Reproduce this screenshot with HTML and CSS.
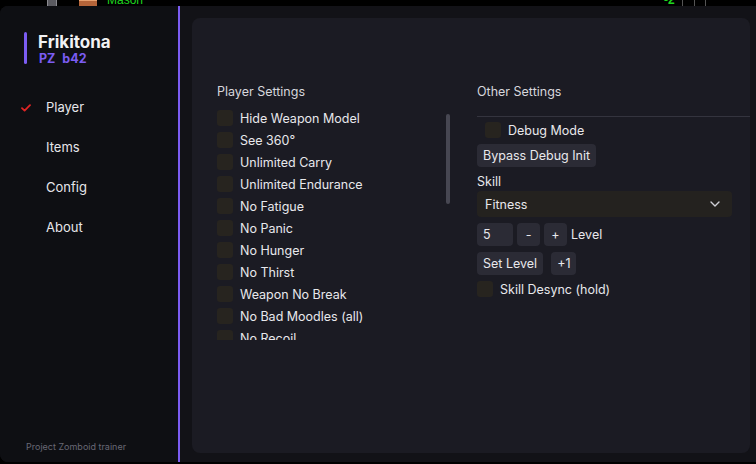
FILE: index.html
```html
<!DOCTYPE html>
<html>
<head>
<meta charset="utf-8">
<link rel="stylesheet" href="styles.css">
</head>
<body>
<div class="game">
  <span class="g-bar"></span>
  <span class="g-brick"></span>
  <span class="g-name">Mason</span>
  <span class="g-num">-2</span>
  <span class="g-line l1"></span>
  <span class="g-line l2"></span>
  <span class="g-line l3"></span>
</div>
<div class="window">
  <aside class="sidebar">
    <div class="brand">
      <div class="brand-bar"></div>
      <div class="brand-text">
        <div class="brand-title">Frikitona</div>
        <div class="brand-sub">PZ b42</div>
      </div>
    </div>
    <nav class="nav">
      <div class="nav-item active">
        <svg class="check" viewBox="0 0 10 8" width="10" height="8"><path d="M1 4.2 L3.6 6.6 L9 1.2" fill="none" stroke="#e02424" stroke-width="1.8" stroke-linecap="round" stroke-linejoin="round"/></svg>
        <span>Player</span>
      </div>
      <div class="nav-item"><span>Items</span></div>
      <div class="nav-item"><span>Config</span></div>
      <div class="nav-item"><span>About</span></div>
    </nav>
    <div class="footer">Project Zomboid trainer</div>
  </aside>
  <div class="divider"></div>
  <main class="content">
    <section class="panel">
      <div class="col col-left">
        <div class="heading">Player Settings</div>
        <div class="list-wrap">
          <div class="list">
            <label class="row"><span class="box"></span>Hide Weapon Model</label>
            <label class="row"><span class="box"></span>See 360°</label>
            <label class="row"><span class="box"></span>Unlimited Carry</label>
            <label class="row"><span class="box"></span>Unlimited Endurance</label>
            <label class="row"><span class="box"></span>No Fatigue</label>
            <label class="row"><span class="box"></span>No Panic</label>
            <label class="row"><span class="box"></span>No Hunger</label>
            <label class="row"><span class="box"></span>No Thirst</label>
            <label class="row"><span class="box"></span>Weapon No Break</label>
            <label class="row"><span class="box"></span>No Bad Moodles (all)</label>
            <label class="row"><span class="box"></span>No Recoil</label>
          </div>
          <div class="scrollbar"></div>
        </div>
      </div>
      <div class="col col-right">
        <div class="heading">Other Settings</div>
        <div class="sep"></div>
        <label class="row indent"><span class="box"></span>Debug Mode</label>
        <div class="btn-row bypass-row"><button class="btn">Bypass Debug Init</button></div>
        <div class="label">Skill</div>
        <div class="select">
          <span>Fitness</span>
          <svg viewBox="0 0 10 6" width="10" height="6"><path d="M1 1 L5 5 L9 1" fill="none" stroke="#cfcfd6" stroke-width="1.4" stroke-linecap="round" stroke-linejoin="round"/></svg>
        </div>
        <div class="btn-row level-row">
          <div class="input">5</div>
          <button class="btn sq">-</button>
          <button class="btn sq">+</button>
          <span class="level">Level</span>
        </div>
        <div class="btn-row set-row">
          <button class="btn">Set Level</button>
          <button class="btn">+1</button>
        </div>
        <label class="row"><span class="box"></span>Skill Desync (hold)</label>
      </div>
    </section>
  </main>
</div>
</body>
</html>
```

FILE: styles.css
```css
* { box-sizing: border-box; }
html, body { margin: 0; padding: 0; }
body {
  background: #000;
  width: 756px;
  height: 464px;
  overflow: hidden;
  font-family: Inter, "Noto Sans", sans-serif;
  color: #e8e8ec;
}
.game {
  position: relative;
  height: 6px;
  overflow: hidden;
}
.game > * { position: absolute; }
.g-bar { left: 47px; top: 0; width: 10px; height: 6px; background: #5a5a60; border-left: 1px solid #8a8a90; border-right: 1px solid #8a8a90; }
.g-brick { left: 79px; top: 0; width: 18px; height: 6px; background: #b5653a; border-top: 1px solid #e7a070; }
.g-name { left: 107px; top: -7px; font-size: 12px; line-height: 14px; color: #1fd51f; font-family: "Liberation Sans", sans-serif; }
.g-num { left: 664px; top: -7px; font-size: 12px; line-height: 14px; color: #1fd51f; font-family: "Liberation Sans", sans-serif; font-weight: bold; }
.g-line { top: 0; width: 1px; height: 6px; background: #555; }
.l1 { left: 682px; }
.l2 { left: 694px; }
.l3 { left: 705px; }

.window {
  display: flex;
  height: 456px;
  background: #121217;
  border-radius: 8px 0 0 8px;
}
.sidebar {
  width: 178px;
  background: #0e0f13;
  border-radius: 8px 0 0 8px;
  display: flex;
  flex-direction: column;
  padding: 27px 0 10px 0;
}
.brand {
  display: flex;
  padding-left: 24px;
  gap: 11px;
}
.brand-bar {
  width: 3px;
  height: 32px;
  background: #7b5cf2;
  border-radius: 2px;
  margin-top: -1px;
}
.brand-title {
  font-size: 17px;
  font-weight: 700;
  line-height: 20px;
  color: #f2f2f4;
  margin-top: -1px;
}
.brand-sub {
  font-size: 12.5px;
  font-weight: 700;
  line-height: 14px;
  color: #7b5cf2;
  word-spacing: 4px;
  margin-left: 1px;
}
.nav {
  margin-top: 21px;
  display: flex;
  flex-direction: column;
}
.nav-item {
  height: 40px;
  display: flex;
  align-items: center;
  padding-left: 46px;
  position: relative;
  font-size: 13px;
  color: #e6e6ea;
}
.check {
  position: absolute;
  left: 21px;
  top: 17px;
}
.footer {
  margin-top: auto;
  padding-left: 26px;
  font-size: 9px;
  color: #686875;
}
.divider {
  width: 2px;
  background: #7b5cf2;
}
.content {
  flex: 1;
  padding: 12px 6px 9px 12px;
}
.panel {
  height: 100%;
  background: #1b1b23;
  border-radius: 8px;
  display: flex;
  padding: 76px 0 0 25px;
}
.heading {
  font-size: 12.5px;
  color: #d6d6dc;
  line-height: 14px;
  margin-top: -9px;
}
.col-left {
  width: 260px;
}
.col-right {
  flex: 1;
  display: flex;
  flex-direction: column;
}
.list-wrap {
  position: relative;
  margin-top: 6px;
  height: 235px;
  overflow: hidden;
  width: 233px;
}
.list {
  display: flex;
  flex-direction: column;
  padding-top: 2px;
}
.row {
  display: flex;
  align-items: center;
  height: 22px;
  gap: 7px;
  font-size: 12.5px;
  color: #e8e8ec;
  flex: none;
}
.box {
  width: 16px;
  height: 16px;
  background: #27241f;
  border-radius: 3px;
  flex: none;
}
.scrollbar {
  position: absolute;
  right: 0;
  top: 9px;
  width: 4px;
  height: 90px;
  background: #474752;
  border-radius: 2px;
}
.sep {
  height: 1px;
  background: #34343e;
  margin-top: 17px;
  margin-bottom: 2px;
  flex: none;
}
.indent { padding-left: 8px; }
.btn-row {
  display: flex;
  gap: 4px;
  align-items: center;
  flex: none;
}
.btn {
  font-family: inherit;
  font-size: 12.5px;
  color: #e8e8ec;
  background: #2b2b35;
  border: none;
  border-radius: 4px;
  height: 23px;
  padding: 0 6px;
  margin: 0;
}
.bypass-row { margin-top: 3px; }
.label {
  font-size: 12.5px;
  color: #e8e8ec;
  margin-top: 7px;
  line-height: 15px;
}
.select {
  margin-top: 2px;
  width: 255px;
  height: 26px;
  background: #24221f;
  border-radius: 4px;
  display: flex;
  align-items: center;
  justify-content: space-between;
  padding: 0 12px 0 8px;
  font-size: 12.5px;
  flex: none;
}
.level-row { margin-top: 6px; }
.input {
  width: 36px;
  height: 23px;
  background: #2b2b35;
  border-radius: 4px;
  font-size: 12.5px;
  display: flex;
  align-items: center;
  padding-left: 6px;
}
.sq { width: 23px; padding: 0; }
.level { font-size: 12.5px; }
.set-row { margin-top: 6px; gap: 8px; margin-bottom: 3px; }
```
